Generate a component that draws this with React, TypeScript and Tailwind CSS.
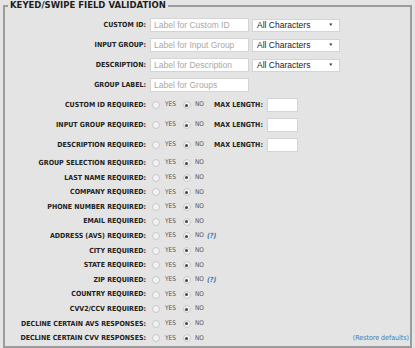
import React from "react";

const LABEL_FONT = "[font-family:'DejaVu_Sans_Condensed','DejaVu_Sans',sans-serif]";

type Row = { label: string; help?: boolean };

const TEXT_ROWS = [
	{ label: "CUSTOM ID:", placeholder: "Label for Custom ID", select: true },
	{ label: "INPUT GROUP:", placeholder: "Label for Input Group", select: true },
	{ label: "DESCRIPTION:", placeholder: "Label for Description", select: true },
	{ label: "GROUP LABEL:", placeholder: "Label for Groups", select: false },
];

const MAX_ROWS: Row[] = [
	{ label: "CUSTOM ID REQUIRED:" },
	{ label: "INPUT GROUP REQUIRED:" },
	{ label: "DESCRIPTION REQUIRED:" },
];

const COMPACT_ROWS: Row[] = [
	{ label: "GROUP SELECTION REQUIRED:" },
	{ label: "LAST NAME REQUIRED:" },
	{ label: "COMPANY REQUIRED:" },
	{ label: "PHONE NUMBER REQUIRED:" },
	{ label: "EMAIL REQUIRED:" },
	{ label: "ADDRESS (AVS) REQUIRED:", help: true },
	{ label: "CITY REQUIRED:" },
	{ label: "STATE REQUIRED:" },
	{ label: "ZIP REQUIRED:", help: true },
	{ label: "COUNTRY REQUIRED:" },
	{ label: "CVV2/CCV REQUIRED:" },
	{ label: "DECLINE CERTAIN AVS RESPONSES:" },
	{ label: "DECLINE CERTAIN CVV RESPONSES:" },
];

function Radio({ checked }: { checked?: boolean }) {
	return (
		<span className="flex size-[8px] shrink-0 items-center justify-center rounded-full border border-[#c8c8c8] bg-[#f2f2f2]">
			{checked && <span className="size-[3px] rounded-full bg-[#444]" />}
		</span>
	);
}

function YesNo({ help }: { help?: boolean }) {
	return (
		<div className={`flex items-center text-[6.5px] text-[#555] ${LABEL_FONT}`}>
			<span className="ml-[2px]">
				<Radio />
			</span>
			<span className="ml-[5px]">YES</span>
			<span className="ml-[7px]">
				<Radio checked />
			</span>
			<span className="ml-[4px]">NO</span>
			{help && (
				<span className="ml-[3px] text-[7px] font-bold italic text-[#3f7bb6]">(?)</span>
			)}
		</div>
	);
}

function Label({ children }: { children: React.ReactNode }) {
	return (
		<div className={`w-[141px] shrink-0 text-right text-[7px] font-bold text-[#222] ${LABEL_FONT}`}>
			{children}
		</div>
	);
}

export default function App() {
	return (
		<div className="h-[348px] w-[415px] overflow-hidden bg-[#e4e4e4] px-[3px]">
			<fieldset className="border-2 border-[#9c9c9c]">
				<legend className="ml-[3px] px-[2px] font-['DejaVu_Sans',sans-serif] text-[8.5px] font-bold leading-[11px] text-[#1e1e1e]">
					KEYED/SWIPE FIELD VALIDATION
				</legend>
				<div className="flex flex-col pt-[4px]">
					{TEXT_ROWS.map((row) => (
						<div key={row.label} className="flex h-[20px] items-center">
							<Label>{row.label}</Label>
							<input
								placeholder={row.placeholder}
								className="ml-[4px] h-[14px] w-[99px] border border-[#d4d4d4] bg-white px-[3px] font-['Liberation_Sans',sans-serif] text-[8.5px] text-[#333] placeholder:text-[#a8a8a8]"
							/>
							{row.select && (
								<div className="ml-[3px] flex h-[13px] w-[88px] items-center justify-between border border-[#d4d4d4] bg-white pr-[6px] pl-[4px] font-['Liberation_Sans',sans-serif] text-[8.5px] text-[#222]">
									<span>All Characters</span>
									<span className="text-[4.5px]">▼</span>
								</div>
							)}
						</div>
					))}
					{MAX_ROWS.map((row) => (
						<div key={row.label} className="flex h-[20px] items-center">
							<Label>{row.label}</Label>
							<div className="ml-[4px] w-[64px]">
								<YesNo />
							</div>
							<span className={`text-[7px] font-bold text-[#222] ${LABEL_FONT}`}>
								MAX LENGTH:
							</span>
							<input className="ml-[4px] h-[14px] w-[31px] border border-[#d4d4d4] bg-white" />
						</div>
					))}
					<div className="mt-[1px] flex flex-col">
						{COMPACT_ROWS.map((row, i) => (
							<div key={row.label} className="flex h-[14.6px] items-center">
								<Label>{row.label}</Label>
								<div className="ml-[4px]">
									<YesNo help={row.help} />
								</div>
								{i === COMPACT_ROWS.length - 1 && (
									<a
										href="#"
										className={`ml-auto pr-[1px] text-[7px] text-[#3f7bb6] ${LABEL_FONT}`}
									>
										(Restore defaults)
									</a>
								)}
							</div>
						))}
					</div>
				</div>
			</fieldset>
		</div>
	);
}
